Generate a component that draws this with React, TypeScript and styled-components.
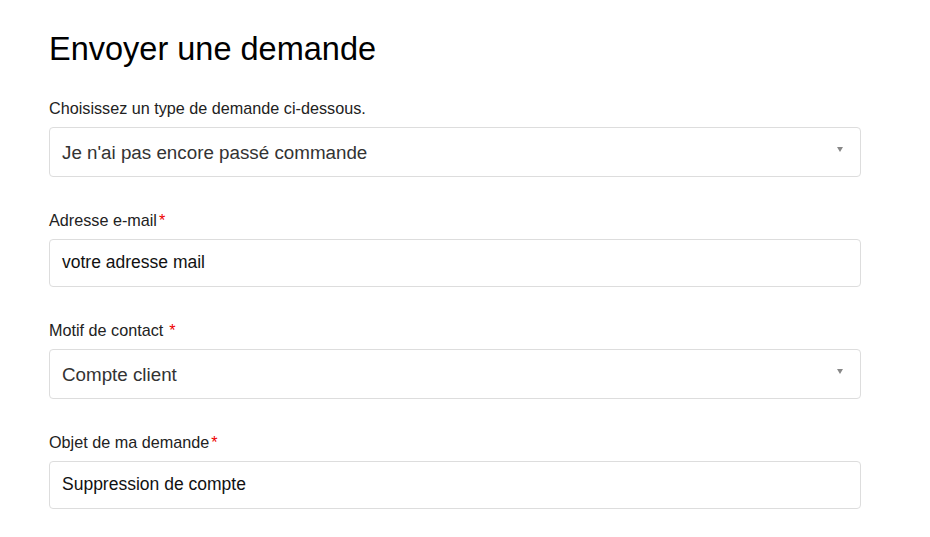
import React from "react";
import styled, { createGlobalStyle } from "styled-components";

const Global = createGlobalStyle`
  html, body { margin: 0; padding: 0; background: #fff; }
  body { font-family: "Liberation Sans", Arial, sans-serif; }
`;

const Page = styled.div`
  padding: 26px 0 0 49px;
  width: 812px;
`;

const Title = styled.h1`
  margin: 0 0 26px;
  font-size: 32.5px;
  line-height: 46px;
  font-weight: 400;
  color: #000;
`;

const Form = styled.form`
  display: flex;
  flex-direction: column;
  gap: 33px;
`;

const Field = styled.div`
  display: flex;
  flex-direction: column;
  gap: 9px;
`;

const Label = styled.label`
  font-size: 16.2px;
  line-height: 20px;
  color: #222;
`;

const Req = styled.span<{ $spaced?: boolean }>`
  color: #e00;
  margin-left: ${(p) => (p.$spaced ? "6px" : "2px")};
`;

const Box = styled.div<{ $h: number; $shift: number }>`
  box-sizing: border-box;
  height: ${(p) => p.$h}px;
  border: 1px solid #ddd;
  border-radius: 4px;
  display: flex;
  align-items: center;
  padding: ${(p) => (p.$shift > 0 ? `${p.$shift}px 12px 0` : `0 12px ${-p.$shift}px`)};
  position: relative;
`;

const SelectText = styled.span`
  font-size: 18.8px;
  color: #333;
`;

const InputText = styled.span`
  font-size: 17.5px;
  color: #111;
`;

const Arrow = styled.span`
  position: absolute;
  right: 17px;
  top: 50%;
  margin-top: -5px;
  width: 0;
  height: 0;
  border-left: 3.5px solid transparent;
  border-right: 3.5px solid transparent;
  border-top: 5px solid #888;
`;

export default function App() {
  return (
    <Page>
      <Global />
      <Title>Envoyer une demande</Title>
      <Form>
        <Field>
          <Label>Choisissez un type de demande ci-dessous.</Label>
          <Box $h={50} $shift={1}>
            <SelectText>Je n'ai pas encore passé commande</SelectText>
            <Arrow />
          </Box>
        </Field>
        <Field>
          <Label>
            Adresse e-mail<Req>*</Req>
          </Label>
          <Box $h={48} $shift={-1}>
            <InputText>votre adresse mail</InputText>
          </Box>
        </Field>
        <Field>
          <Label>
            Motif de contact<Req $spaced>*</Req>
          </Label>
          <Box $h={50} $shift={1}>
            <SelectText>Compte client</SelectText>
            <Arrow />
          </Box>
        </Field>
        <Field>
          <Label>
            Objet de ma demande<Req>*</Req>
          </Label>
          <Box $h={48} $shift={-1}>
            <InputText>Suppression de compte</InputText>
          </Box>
        </Field>
      </Form>
    </Page>
  );
}
